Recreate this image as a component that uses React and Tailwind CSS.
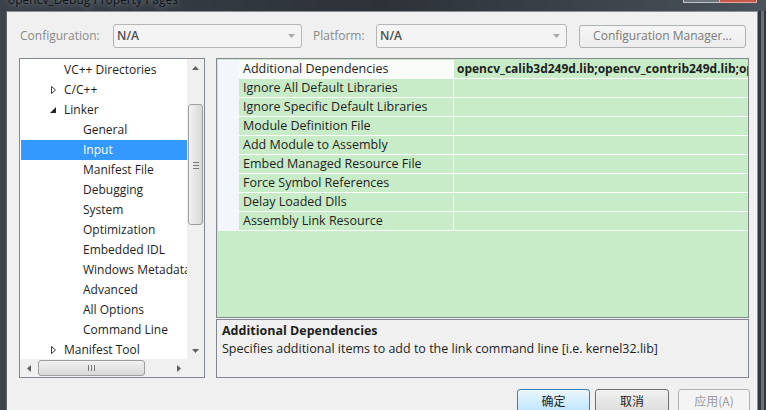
import React from 'react';

const font = { fontFamily: '"Open Sans", "Noto Sans", sans-serif' };

const treeItems = [
  { label: 'VC++ Directories', level: 1 },
  { label: 'C/C++', level: 1, arrow: 'closed' },
  { label: 'Linker', level: 1, arrow: 'open' },
  { label: 'General', level: 2 },
  { label: 'Input', level: 2, selected: true },
  { label: 'Manifest File', level: 2 },
  { label: 'Debugging', level: 2 },
  { label: 'System', level: 2 },
  { label: 'Optimization', level: 2 },
  { label: 'Embedded IDL', level: 2 },
  { label: 'Windows Metadata', level: 2 },
  { label: 'Advanced', level: 2 },
  { label: 'All Options', level: 2 },
  { label: 'Command Line', level: 2 },
  { label: 'Manifest Tool', level: 1, arrow: 'closed' },
];

const props = [
  'Additional Dependencies',
  'Ignore All Default Libraries',
  'Ignore Specific Default Libraries',
  'Module Definition File',
  'Add Module to Assembly',
  'Embed Managed Resource File',
  'Force Symbol References',
  'Delay Loaded Dlls',
  'Assembly Link Resource',
];

const Combo = ({ width }) => (
  <div className={`${width} h-[24px] border border-[#b5b5b5] rounded-[3px] bg-[#f4f4f4] flex items-center justify-between pl-[3px] pr-[6px]`}>
    <span className="text-[#4f4f4f] font-semibold">N/A</span>
    <svg width="7" height="4" viewBox="0 0 7 4"><path d="M0 0h7L3.5 4z" fill="#a8a8a8" /></svg>
  </div>
);

const Arrow = ({ type }) => {
  if (type === 'open')
    return (
      <svg width="6" height="6" viewBox="0 0 6 6"><path d="M6 0v6H0z" fill="#262626" /></svg>
    );
  return (
    <svg width="5" height="8" viewBox="0 0 5 8"><path d="M0.5 0.5v7L4.5 4z" fill="none" stroke="#404040" strokeWidth="1" /></svg>
  );
};

const TreePanel = () => (
  <div className="w-[186px] h-[320px] border border-[#828790] bg-white flex flex-col">
    <div className="flex flex-1 min-h-0">
      <div className="flex-1 min-w-0 overflow-hidden pt-[1px] pl-[1px]">
        {treeItems.map((it) => (
          <div
            key={it.label}
            className={`h-[20px] flex items-center whitespace-nowrap ${it.selected ? 'bg-[#3399ff] text-white' : 'text-[#1e1e1e]'}`}
          >
            <div className={`${it.level === 1 ? 'w-[43px]' : 'w-[62px]'} shrink-0 flex justify-end pr-[8px]`}>
              {it.arrow && <Arrow type={it.arrow} />}
            </div>
            <span>{it.label}</span>
          </div>
        ))}
      </div>
      <div className="w-[17px] shrink-0 bg-[#f0f0f0] flex flex-col items-center">
        <div className="h-[17px] flex items-center justify-center">
          <svg width="7" height="4" viewBox="0 0 7 4"><path d="M0 4h7L3.5 0z" fill="#606060" /></svg>
        </div>
        <div className="h-[28px]" />
        <div className="w-[15px] h-[121px] rounded-[3px] border border-[#9e9e9e] bg-gradient-to-r from-[#f2f2f2] to-[#d8d8d8] flex items-center justify-center">
          <div className="flex flex-col gap-[2px] mt-[2px]">
            <div className="w-[6px] h-[1px] bg-[#777]" />
            <div className="w-[6px] h-[1px] bg-[#777]" />
            <div className="w-[6px] h-[1px] bg-[#777]" />
          </div>
        </div>
        <div className="flex-1" />
        <div className="h-[17px] flex items-center justify-center">
          <svg width="7" height="4" viewBox="0 0 7 4"><path d="M0 0h7L3.5 4z" fill="#606060" /></svg>
        </div>
      </div>
    </div>
    <div className="h-[18px] flex shrink-0">
      <div className="flex-1 bg-[#f0f0f0] flex items-center">
        <div className="w-[18px] flex justify-center">
          <svg width="4" height="7" viewBox="0 0 4 7"><path d="M4 0v7L0 3.5z" fill="#606060" /></svg>
        </div>
        <div className="w-[107px] h-[16px] rounded-[3px] border border-[#9e9e9e] bg-gradient-to-b from-[#f2f2f2] to-[#d8d8d8] flex items-center justify-center gap-[2px]">
          <div className="w-[1px] h-[6px] bg-[#777]" />
          <div className="w-[1px] h-[6px] bg-[#777]" />
          <div className="w-[1px] h-[6px] bg-[#777]" />
        </div>
        <div className="flex-1 flex justify-end pr-[6px]">
          <svg width="4" height="7" viewBox="0 0 4 7"><path d="M0 0v7L4 3.5z" fill="#606060" /></svg>
        </div>
      </div>
      <div className="w-[17px] bg-[#f0f0f0]" />
    </div>
  </div>
);

const Grid = () => (
  <div className="h-[260px] border border-[#828790] bg-[#c8ecc8] overflow-hidden pt-[1px] pl-[1px] text-[12.5px]">
    {props.map((p, i) => (
      <div key={p} className="h-[19px] flex">
        <div className="w-[21px] shrink-0 bg-[#f3f6fb]" />
        <div className={`w-[214px] shrink-0 border-b border-white pl-[4px] leading-[18px] text-[#1e1e1e] whitespace-nowrap overflow-hidden ${i === 0 ? 'bg-[#f9fbf9]' : ''}`}>
          {p}
        </div>
        <div className="flex-1 min-w-0 border-b border-l border-white pl-[3px] leading-[18px] font-bold text-[#1e1e1e] whitespace-nowrap overflow-hidden text-[12px]">
          {i === 0 ? 'opencv_calib3d249d.lib;opencv_contrib249d.lib;opencv_core249d.lib' : ''}
        </div>
      </div>
    ))}
  </div>
);

const Button = ({ children, primary, disabled, width }) => (
  <div
    className={`${width} h-[24px] rounded-[3px] flex items-center justify-center border ${
      primary
        ? 'border-[#3c7fb1] bg-gradient-to-b from-[#eaf6fd] to-[#bee6fd] text-[#1e1e1e]'
        : disabled
        ? 'border-[#adb2b5] bg-[#f4f4f4] text-[#9a9a9a]'
        : 'border-[#707070] bg-gradient-to-b from-[#f2f2f2] to-[#dcdcdc] text-[#1e1e1e]'
    }`}
    style={{ fontFamily: '"Noto Sans CJK SC", "Open Sans", sans-serif' }}
  >
    {children}
  </div>
);

export default function App() {
  return (
    <div className="w-[766px] h-[410px] overflow-hidden bg-[#2f363d] flex flex-col text-[12px] relative" style={font}>
      {/* title bar */}
      <div className="h-[11px] shrink-0 overflow-hidden bg-gradient-to-r from-[#3a4149] via-[#2c3238] to-[#4a525b]">
        <div className="mt-[-7px] ml-[8px] text-[12px] leading-[14px] text-[#101418] whitespace-nowrap" style={{ textShadow: '0 0 6px #9aa4ad' }}>
          opencv_Debug Property Pages
        </div>
      </div>
      <div className="absolute top-0 left-[683px] w-[74px] h-[3px] flex">
        <div className="w-[37px] h-full bg-[#6c737a] border-x border-b border-[#c0c4c8]" />
        <div className="flex-1 h-full bg-[#c9564a] border-r border-b border-[#e0a8a0]" />
      </div>
      <div className="flex-1 flex min-h-0">
        <div className="w-[7px] shrink-0 bg-[#3d444b] border-r border-[#5e656c]" />
        <div className="w-[750px] shrink-0 bg-[#f0f0f0] border-t border-[#8a9096] flex flex-col">
          {/* configuration row */}
          <div className="h-[24px] mt-[12px] flex items-center">
            <span className="ml-[13px] w-[93px] text-[#8a8a8a]">Configuration:</span>
            <Combo width="w-[189px]" />
            <span className="ml-[11px] w-[63px] text-[#8a8a8a]">Platform:</span>
            <Combo width="w-[191px]" />
            <div className="ml-[12px] w-[167px] h-[23px] border border-[#adb2b5] rounded-[3px] bg-gradient-to-b from-[#f6f6f6] to-[#ececec] flex items-center justify-center text-[#7a7a7a]">
              Configuration Manager...
            </div>
          </div>
          {/* main panels */}
          <div className="flex mt-[10px] ml-[12px] gap-[11px]">
            <TreePanel />
            <div className="w-[533px] flex flex-col gap-[1px]">
              <Grid />
              <div className="h-[59px] border border-[#828790] bg-[#f0f0f0] px-[5px] pt-[2px] text-[#1e1e1e] text-[12.5px]">
                <div className="font-bold leading-[18px]">Additional Dependencies</div>
                <div className="leading-[18px]">Specifies additional items to add to the link command line [i.e. kernel32.lib]</div>
              </div>
            </div>
          </div>
          {/* buttons */}
          <div className="flex justify-end mt-[11px] pr-[7px]">
            <Button primary width="w-[73px]">确定</Button>
            <div className="w-[5px]" />
            <Button width="w-[74px]">取消</Button>
            <div className="w-[9px]" />
            <Button disabled width="w-[72px]">应用(A)</Button>
          </div>
        </div>
        <div className="flex-1 bg-[#2f363d] border-l border-[#8a9096] flex">
          <div className="w-[3px]" />
          <div className="w-[3px] bg-[#6a7178]" />
        </div>
      </div>
    </div>
  );
}
